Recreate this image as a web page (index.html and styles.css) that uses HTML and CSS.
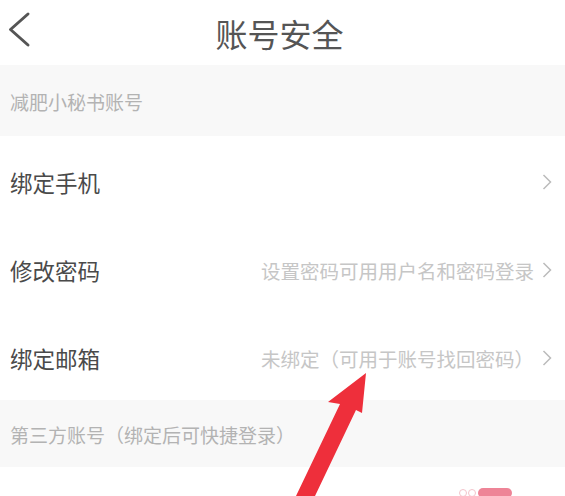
FILE: index.html
```html
<!DOCTYPE html>
<html>
<head>
  <title>账号安全</title>
  <link rel="stylesheet" href="styles.css">
</head>
<body>

  <div class="header-bar">
    <svg class="back-icon" width="40" height="65" viewBox="0 0 40 65">
      <path d="M28 14 L10.5 29.5 L28 45" fill="none" stroke="#555" stroke-width="3" stroke-linecap="round" stroke-linejoin="round"/>
    </svg>
    <h1 class="page-title">账号安全</h1>
  </div>

  <div class="section-title first">减肥小秘书账号</div>

  <div class="row">
    <span class="row-label">绑定手机</span>
    <span class="row-right">
      <svg class="arrow-right" width="10" height="16" viewBox="0 0 10 16"><path d="M1.5 1 L8.5 8 L1.5 15" fill="none" stroke="#bbb" stroke-width="1.5"/></svg>
    </span>
  </div>

  <div class="row">
    <span class="row-label">修改密码</span>
    <span class="row-right">
      <span class="row-detail">设置密码可用用户名和密码登录</span>
      <svg class="arrow-right" width="10" height="16" viewBox="0 0 10 16"><path d="M1.5 1 L8.5 8 L1.5 15" fill="none" stroke="#bbb" stroke-width="1.5"/></svg>
    </span>
  </div>

  <div class="row">
    <span class="row-label">绑定邮箱</span>
    <span class="row-right">
      <span class="row-detail">未绑定（可用于账号找回密码）</span>
      <svg class="arrow-right" width="10" height="16" viewBox="0 0 10 16"><path d="M1.5 1 L8.5 8 L1.5 15" fill="none" stroke="#bbb" stroke-width="1.5"/></svg>
    </span>
  </div>

  <div class="section-title second">第三方账号（绑定后可快捷登录）</div>

  <div class="row third-party">
    <span class="row-label"></span>
    <span class="weibo-badge">
      <span class="dot"></span><span class="dot"></span><span class="bar"></span>
    </span>
  </div>

  <!-- red annotation arrow drawn over the page -->
  <svg class="annotation" width="565" height="496" viewBox="0 0 565 496">
    <polygon points="366,373 362,413 356,410 315,496 296,496 340,404 328,402" fill="#ee2f3b"/>
  </svg>

</body>
</html>
```

FILE: styles.css
```css
body {
  font-family: "Noto Sans CJK SC", "Noto Sans", sans-serif;
  background-color: #fff;
  color: #555;
  margin: 0;
  padding: 0;
  width: 565px;
  height: 496px;
  overflow: hidden;
  position: relative;
}

.header-bar {
  height: 65px;
  display: flex;
  align-items: center;
  justify-content: center;
  position: relative;
}

.back-icon {
  position: absolute;
  left: 0;
  top: 0;
}

.page-title {
  margin: 0;
  font-size: 32px;
  font-weight: normal;
  color: #555;
  padding-right: 6px;
}

.section-title {
  background-color: #f8f8f8;
  color: #b3b3b3;
  font-size: 19px;
  padding-left: 10px;
  display: flex;
  align-items: center;
}

.section-title.first {
  height: 71px;
  padding-top: 2px;
  box-sizing: border-box;
}

.section-title.second {
  height: 67px;
  padding-top: 2px;
  box-sizing: border-box;
}

.row {
  height: 88px;
  display: flex;
  align-items: center;
  justify-content: space-between;
  padding: 4px 13px 0 10px;
  box-sizing: border-box;
}

.row-label {
  font-size: 22.5px;
  color: #4a4a4a;
}

.row-right {
  display: flex;
  align-items: center;
  gap: 8px;
}

.row-detail {
  font-size: 19.5px;
  color: #c6c6c6;
}

.arrow-right {
  display: block;
}

.third-party {
  height: 28px;
  align-items: flex-start;
  padding-top: 21px;
  padding-right: 53px;
}

.weibo-badge {
  display: flex;
  align-items: center;
  gap: 1px;
}

.weibo-badge .dot {
  width: 6px;
  height: 6px;
  border-radius: 50%;
  border: 1px solid #f3c4cb;
  background-color: #fff;
}

.weibo-badge .bar {
  width: 34px;
  height: 10px;
  border-radius: 5px;
  background-color: #ee8497;
  margin-left: 1px;
}

.annotation {
  position: absolute;
  left: 0;
  top: 0;
  pointer-events: none;
}
```
